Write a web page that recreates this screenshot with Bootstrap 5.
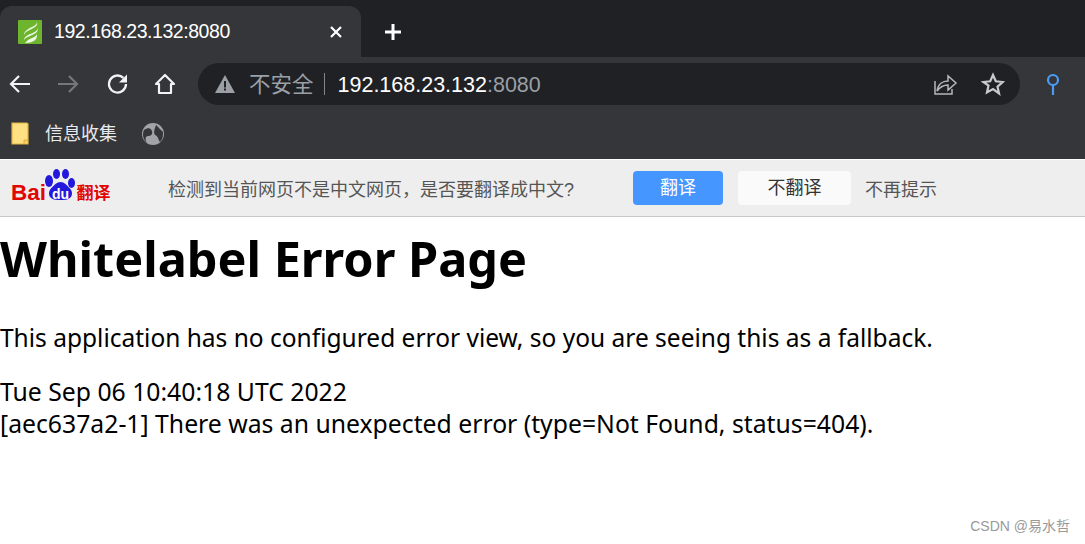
<!DOCTYPE html>
<html lang="zh"><head><meta charset="utf-8"><title>Whitelabel Error Page</title>
<link rel="stylesheet" href="https://cdn.jsdelivr.net/npm/bootstrap@5.3.0/dist/css/bootstrap.min.css">
<style>
html,body{height:544px;overflow:hidden;background:#fff;}
body{font-family:"Noto Sans","Noto Sans CJK SC",sans-serif;color:#000;}
.ui{font-family:"Liberation Sans","Noto Sans CJK SC",sans-serif;}
.strip{height:57px;background:#202124;padding-top:6px;}
.tabx{width:361px;height:51px;background:#35363a;border-radius:12px 12px 0 0;padding:0 13px 0 18px;color:#fff;font-size:19.5px;}
.fav{width:24px;height:24px;}
.tab-title{margin-left:12px;letter-spacing:-.45px;}
.plus{margin-left:20px;}
.tools{height:52px;background:#35363a;padding:2px 0 0 8px;}
.ic{width:24px;height:24px;flex:none;}
.tool-gap{margin-right:24px;}
.tool-gap2{margin-right:26px;}
.tool-gap3{margin-right:23px;}
.omni{width:822px;height:42px;background:#202124;border-radius:21px;margin-left:-2px;padding:0 15px 0 15px;font-size:21.5px;}
.unsafe{color:#9aa0a6;margin-left:12px;position:relative;top:1px;}
.sepv{width:1px;height:22px;background:#80868b;margin:0 13px 0 10px;}
.host{color:#fff;position:relative;top:1px;}
.port{color:#9aa0a6;position:relative;top:1px;}
.bms{height:50px;background:#35363a;color:#e8eaed;font-size:18px;padding-left:10px;}
.bm-label{margin:0 24px 0 11px;}
.gapw{height:1px;background:#fff;}
.trans{height:57px;background:#eeeeee;border-bottom:1px solid #c8c8c8;font-size:18px;color:#555;}
.logo{width:110px;margin-left:9px;}
.prompt{margin-left:49px;width:465px;padding-top:5px;}
.btn-yes{width:90px;height:34px;background:#4596ff;color:#fff;border-radius:4px;border:0;font-size:18px;padding:0;}
.btn-yes:hover{background:#4596ff;color:#fff;}
.btn-no{width:113px;height:34px;background:#fafafa;color:#333;border-radius:4px;border:0;font-size:18px;padding:0;margin-left:15px;}
.never{margin-left:14px;padding-top:5px;}
.pagex{padding-top:8px;}
.pagex h1{font-size:48.6px;font-weight:700;line-height:66px;margin:0 0 31px;}
.pagex p{font-size:24.5px;line-height:32px;margin:0 0 22px;}
.pagex .errs p{font-size:24.75px;margin:0;}
.mark-w{right:15px;bottom:8px;color:#999;font-size:14px;line-height:20px;}
</style></head>
<body class="position-relative">
<div class="ui">
<div class="strip d-flex align-items-start">
  <div class="tabx d-flex align-items-center">
    <svg class="fav" viewBox="0 0 24 24"><rect width="24" height="24" rx="1" fill="#6cb52d"/><path d="M19 2C19 6 12 7 9 10 6 12 6 14 6 15 7 11 13 10 17 7 20 5 19 3 19 2zM20 8c-1 4-6 5-10 7-3 2-4 3-4 5 2-3 7-4 10-6 3-1 4-4 4-6zM19 14c-1 3-6 4-9 6l-3 3c4 0 9-1 11-4 1-2 1-3 1-5z" fill="#eef6e4"/></svg>
    <span class="tab-title flex-grow-1">192.168.23.132:8080</span>
    <svg class="ic" viewBox="0 0 24 24"><path d="M7 7l10 10M17 7L7 17" stroke="#fff" stroke-width="2.200" fill="none"/></svg>
  </div>
  <svg class="ic plus align-self-center" viewBox="0 0 24 24"><path d="M12 4v16M4 12h16" stroke="#fff" stroke-width="3" fill="none"/></svg>
</div>
<div class="tools d-flex align-items-center">
  <svg class="ic tool-gap" viewBox="0 0 24 24"><path d="M22 12H3M11 4l-8 8 8 8" stroke="#f1f3f4" stroke-width="2.200" fill="none"/></svg>
  <svg class="ic tool-gap2" viewBox="0 0 24 24"><path d="M2 12h19M13 4l8 8-8 8" stroke="#74777b" stroke-width="2.200" fill="none"/></svg>
  <svg class="ic tool-gap3" viewBox="0 0 24 24"><path d="M20 12a8.500 8.500 0 1 1-2.600-6.100" stroke="#f1f3f4" stroke-width="2.300" fill="none"/><path d="M21 2.500v8h-8z" fill="#f1f3f4"/></svg>
  <svg class="ic tool-gap3" viewBox="0 0 24 24"><path d="M12 3L3 12h3v9h12v-9h3z" stroke="#f1f3f4" stroke-width="2.200" fill="none" stroke-linejoin="round"/></svg>
  <div class="omni d-flex align-items-center">
    <svg class="ic" viewBox="0 0 24 24"><path d="M12 3L2 21h20z" fill="#9aa0a6"/><rect x="11" y="9" width="2" height="6.500" fill="#202124"/><rect x="11" y="16.500" width="2" height="2" fill="#202124"/></svg>
    <span class="unsafe">不安全</span><span class="sepv"></span>
    <span class="host">192.168.23.132</span><span class="port">:8080</span>
    <svg class="ic ms-auto" viewBox="0 0 24 24"><path d="M1 9v13h17v-5M3 19c1-7 6-10 11-10V4l8 7-8 7v-5c-5 0-8 2-11 6z" stroke="#b5b7ba" stroke-width="1.500" fill="none"/></svg>
    <svg class="ic" style="margin-left:23px" viewBox="0 0 24 24"><path d="M12 3l2.800 6.300 6.900.7-5.200 4.600 1.500 6.800L12 17l-6 3.400 1.500-6.800L2.300 10l6.900-.7z" stroke="#c8cacd" stroke-width="2.200" fill="none"/></svg>
  </div>
  <svg class="ic" style="margin-left:21px" viewBox="0 0 24 24"><circle cx="12" cy="8" r="5" stroke="#4a9cf5" stroke-width="2.200" fill="none"/><path d="M12 13v10" stroke="#4a9cf5" stroke-width="2.200"/></svg>
</div>
<div class="bms d-flex align-items-center">
  <svg class="ic" viewBox="0 0 24 24"><path d="M2 1h15l1 1v20H2z" fill="#ffe082" stroke="#e0b43c" stroke-width="1.200"/><path d="M14 22v-4h4" fill="#f6c945" stroke="#e0b43c"/></svg>
  <span class="bm-label">信息收集</span>
  <svg class="ic" viewBox="0 0 24 24"><circle cx="12" cy="12" r="11" fill="#a0a3a8"/><path d="M3 8c4-3 7-2 8 1s-1 5-4 5-3 4-1 7C2 18 1 12 3 8zM15 3c3 3 5 5 7 7 0 4 0 7-3 10-2-3-2-6-5-7-2-3 0-7 1-10z" fill="#35363a"/></svg>
</div>
<div class="gapw"></div>
<div class="trans d-flex align-items-center">
  <div class="logo d-flex align-items-center">
    <svg width="110" height="40" viewBox="0 0 110 40"><text x="2" y="32" font-family="Liberation Sans" font-weight="700" font-size="22.500" fill="#e10601">Bai</text><g fill="#2319dc"><ellipse cx="40" cy="13" rx="4" ry="6"/><ellipse cx="47.500" cy="6" rx="3.500" ry="5"/><ellipse cx="56.500" cy="6" rx="3.500" ry="5"/><ellipse cx="62.500" cy="15" rx="3.500" ry="5"/><path d="M51.500 14c4 0 6 3 10 7 4 6 0 12-10 11-10 1-14-5-10-11 4-4 6-7 10-7z"/></g><text x="43" y="31" font-family="Liberation Sans" font-weight="700" font-size="14" fill="#fff">du</text><text x="67.500" y="31" font-family="Noto Sans CJK SC" font-weight="700" font-size="17" fill="#e10601">翻译</text></svg>
  </div>
  <span class="prompt text-nowrap">检测到当前网页不是中文网页，是否要翻译成中文?</span>
  <button class="btn btn-yes ui">翻译</button>
  <button class="btn btn-no ui">不翻译</button>
  <span class="never">不再提示</span>
</div>
</div>
<div class="pagex">
  <h1>Whitelabel Error Page</h1>
  <p>This application has no configured error view, so you are seeing this as a fallback.</p>
  <div class="errs"><p>Tue Sep 06 10:40:18 UTC 2022</p><p>[aec637a2-1] There was an unexpected error (type=Not Found, status=404).</p></div>
</div>
<div class="mark-w position-absolute ui">CSDN @易水哲</div>
</body></html>
